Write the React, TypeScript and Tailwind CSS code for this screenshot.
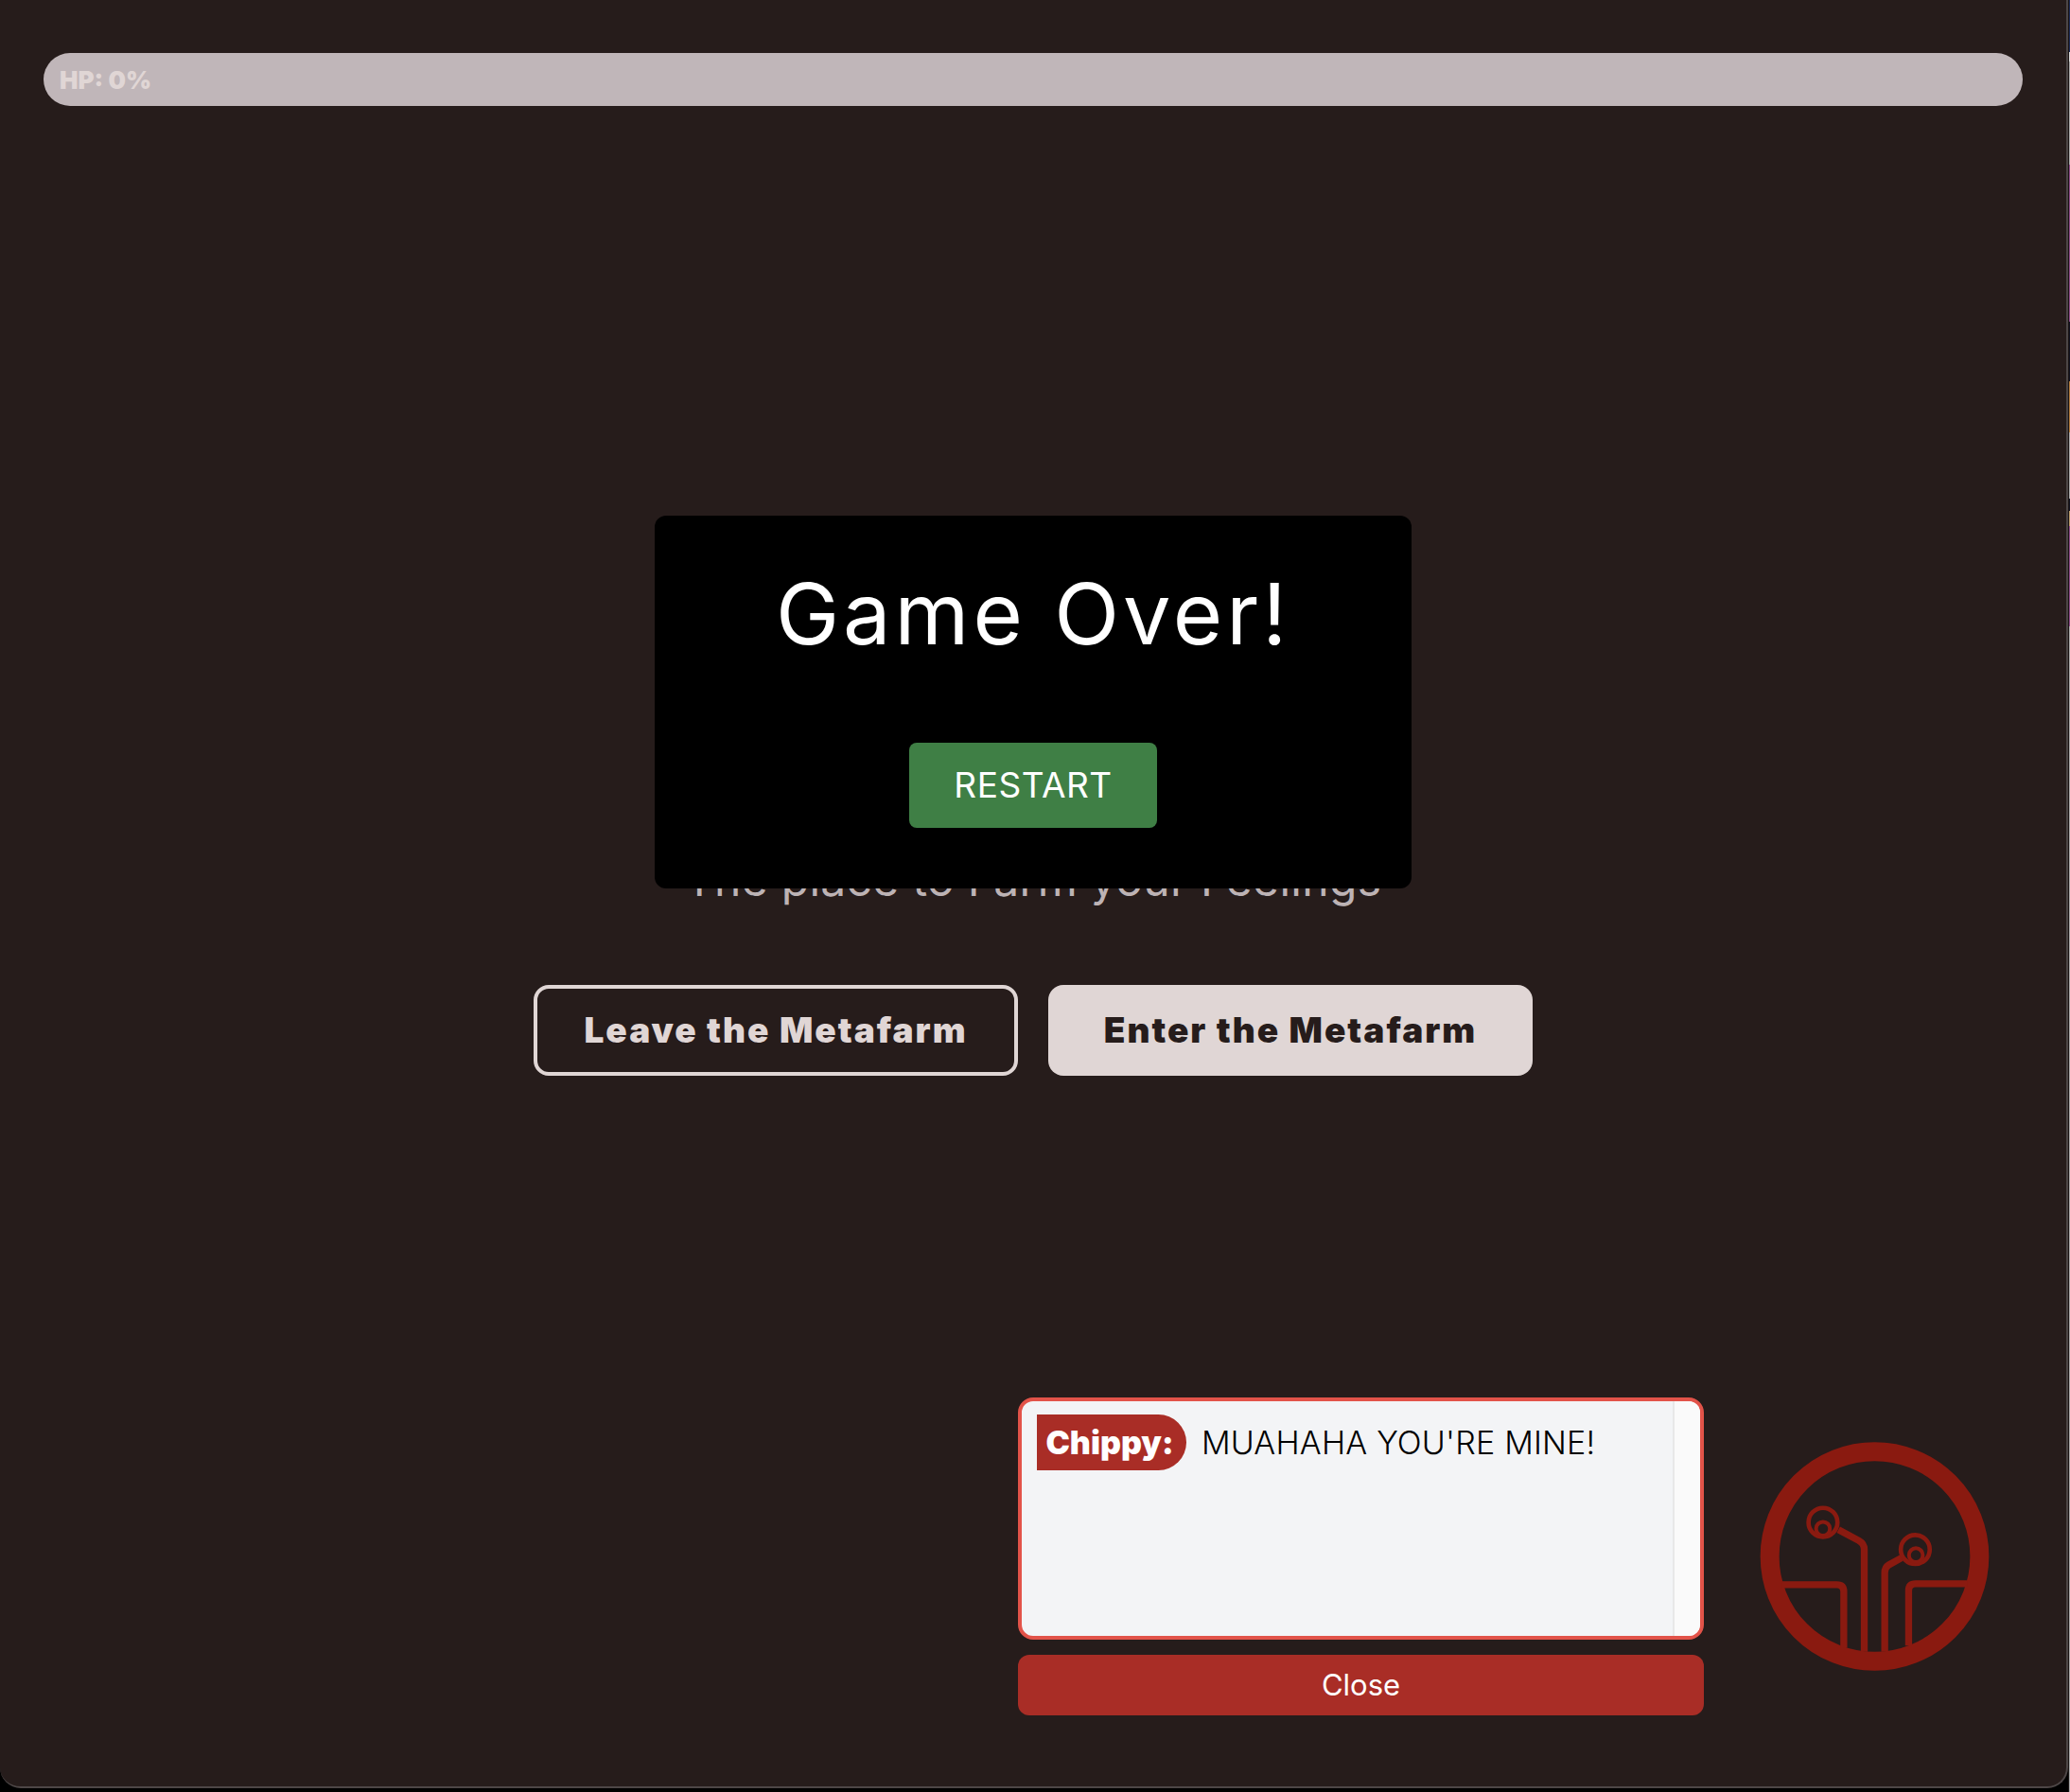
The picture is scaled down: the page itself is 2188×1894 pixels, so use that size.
const DESKTOP_STRIP = [
  { h: 'h-[55px]', bg: 'bg-[#1c2a55]' },
  { h: 'h-[10px]', bg: 'bg-[#d8d8d8]' },
  { h: 'h-[109px]', bg: 'bg-[#a8a8a8]' },
  { h: 'h-[166px]', bg: 'bg-[#8a4a86]' },
  { h: 'h-[63px]', bg: 'bg-[#12121f]' },
  { h: 'h-[54px]', bg: 'bg-[#b07a3c]' },
  { h: 'h-[70px]', bg: 'bg-[#a8a8a8]' },
  { h: 'h-[13px]', bg: 'bg-[#12121f]' },
  { h: 'h-[16px]', bg: 'bg-[#b89a6a]' },
  { h: 'h-[106px]', bg: 'bg-[#8a4a86]' },
]

function ChippyLogo() {
  return (
    <svg viewBox="120 72 730 726" className="w-[243px] h-[242px] shrink-0 mb-[47px]" fill="none" stroke="#8a1a10">
      <circle cx="485" cy="435" r="333" strokeWidth="60" />
      <circle cx="321" cy="327" r="46" strokeWidth="14" />
      <circle cx="321" cy="347" r="22" strokeWidth="12" />
      <circle cx="614" cy="413" r="46" strokeWidth="14" />
      <circle cx="616" cy="431" r="22" strokeWidth="12" />
      <path d="M370 350 L435 385 Q452 395 452 412 L452 738" strokeWidth="22" />
      <path d="M570 440 L530 462 Q517 470 517 487 L517 738" strokeWidth="22" />
      <path d="M190 525 L365 525 Q387 525 387 547 L387 725" strokeWidth="22" />
      <path d="M778 522 L615 522 Q593 522 593 544 L593 718" strokeWidth="22" />
    </svg>
  )
}

function ChatBox() {
  return (
    <div className="w-[725px] flex flex-col gap-4">
      <div className="h-[256px] border-4 border-[#e25349] rounded-2xl flex overflow-hidden bg-[#f3f4f6]">
        <div className="flex-1 pl-4 pr-4 py-[14px] flex items-start gap-[16px]">
          <span className="w-[158px] h-[59px] pr-1 flex items-center justify-center bg-[#a92d26] rounded-r-[30px] text-white font-black text-[34px] font-['Inter',sans-serif]">
            Chippy:
          </span>
          <span className="h-[59px] flex items-center text-black font-light text-[34px] tracking-[0.2px] font-['Inter',sans-serif]">
            MUAHAHA YOU'RE MINE!
          </span>
        </div>
        <div className="w-[29px] bg-[#fafafa] border-l-2 border-[#e8e8e8]" />
      </div>
      <button className="h-[64px] bg-[#a92d26] rounded-xl text-white text-[31px] font-normal font-['Inter',sans-serif]">
        Close
      </button>
    </div>
  )
}

export default function App() {
  return (
    <div className="w-[2188px] h-[1894px] bg-black overflow-hidden flex">
      <div className="relative shrink-0 w-[2186px] h-[1890px] bg-[#261c1b] border-r-2 border-b-2 border-[#4d4646] rounded-b-[22px] flex flex-col">
        {/* HP bar */}
        <div className="mt-[56px] mx-[46px] h-[56px] rounded-full bg-[#c0b6b9] flex items-center px-[17px]">
          <span className="text-[#e0d6d5] font-black text-[26px] font-['Inter',sans-serif]">HP: 0%</span>
        </div>

        {/* hero */}
        <div className="mt-[788px] flex flex-col items-center">
          <p className="text-[#bdb3b5] text-[48px] leading-[60px] font-normal tracking-[0.3px] font-['Inter',sans-serif]">
            The place to Farm your Feelings
          </p>
          <div className="mt-[81px] flex gap-8">
            <button className="w-[512px] h-[96px] border-4 border-[#e0d6d5] rounded-2xl text-[#e0d6d5] font-black text-[37px] tracking-[2px] font-['Inter',sans-serif]">
              Leave the Metafarm
            </button>
            <button className="w-[512px] h-[96px] bg-[#e0d6d5] rounded-2xl text-[#261c1b] font-black text-[37px] tracking-[2px] font-['Inter',sans-serif]">
              Enter the Metafarm
            </button>
          </div>
        </div>

        {/* chat */}
        <div className="mt-auto mb-[75px] flex items-end justify-end gap-[59px] pr-[81px]">
          <ChatBox />
          <ChippyLogo />
        </div>

        {/* game over modal */}
        <div className="absolute left-[692px] top-[545px] w-[800px] h-[394px] bg-black rounded-xl flex flex-col items-center">
          <h1 className="mt-[44px] text-white text-[90px] leading-[120px] font-normal tracking-[4px] font-['Inter',sans-serif]">
            Game Over!
          </h1>
          <button className="mt-[76px] w-[262px] h-[90px] bg-[#3f7f45] rounded-lg text-white text-[37px] font-normal tracking-[0.5px] font-['Inter',sans-serif]">
            RESTART
          </button>
        </div>
      </div>

      {/* sliver of desktop beside the window */}
      <div className="shrink-0 w-[2px] border-l border-[#1a1414] flex flex-col bg-[#a8a8a8]">
        {DESKTOP_STRIP.map((s, i) => (
          <div key={i} className={`${s.h} ${s.bg}`} />
        ))}
      </div>
    </div>
  )
}
